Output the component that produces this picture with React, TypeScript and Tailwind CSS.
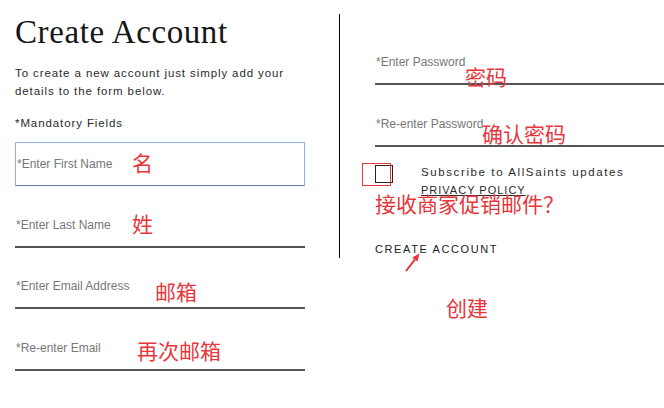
import React from 'react';

const leftFields = [
  { placeholder: '*Enter First Name', focused: true },
  { placeholder: '*Enter Last Name' },
  { placeholder: '*Enter Email Address' },
  { placeholder: '*Re-enter Email' },
];

const rightFields = ['*Enter Password', '*Re-enter Password'];

// red notes drawn over the screenshot
const notes = [
  { text: '名', cls: 'left-[132px] top-[152px]' },
  { text: '姓', cls: 'left-[132px] top-[213px]' },
  { text: '邮箱', cls: 'left-[155px] top-[281px]' },
  { text: '再次邮箱', cls: 'left-[137px] top-[340px]' },
  { text: '密码', cls: 'left-[465px] top-[66px]' },
  { text: '确认密码', cls: 'left-[482px] top-[123px]' },
  { text: '接收商家促销邮件？', cls: 'left-[375px] top-[193px]' },
  { text: '创建', cls: 'left-[446px] top-[297px]' },
];

function Field({ placeholder, focused }: { placeholder: string; focused?: boolean }) {
  return (
    <div
      className={`h-[44px] flex items-center ${
        focused ? 'border border-[#8fb0ea] border-b-[#5f7db8]' : 'border-b-2 border-[#555]'
      }`}
    >
      <input
        type="text"
        placeholder={placeholder}
        className="w-full bg-transparent outline-none pl-px text-[12px] text-[#333] placeholder:text-[#777]"
      />
    </div>
  );
}

export default function App() {
  return (
    <div className="relative w-[664px] h-[408px] overflow-hidden bg-white flex font-['Liberation_Sans',Arial,sans-serif] text-[#2a2a2a]">
      {/* Left column */}
      <div className="ml-[15px] w-[290px] shrink-0 flex flex-col">
        <h1 className="mt-[12px] text-[33px] leading-[40px] tracking-[0.6px] font-['Liberation_Serif','Times_New_Roman',serif] text-[#161616]">
          Create Account
        </h1>
        <p className="mt-[12px] text-[11.5px] leading-[18px] tracking-[0.9px]">
          To create a new account just simply add your
          <br />
          details to the form below.
        </p>
        <p className="mt-[14px] text-[11.5px] leading-[18px] tracking-[0.9px]">*Mandatory Fields</p>
        <div className="mt-[10px] flex flex-col gap-[17.5px]">
          {leftFields.map((f) => (
            <Field key={f.placeholder} placeholder={f.placeholder} focused={f.focused} />
          ))}
        </div>
      </div>

      {/* Divider */}
      <div className="ml-[34px] mt-[14px] h-[244px] w-px bg-black shrink-0" />

      {/* Right column */}
      <div className="ml-[35px] flex-1 flex flex-col pt-[41px]">
        <div className="flex flex-col gap-[17.5px]">
          {rightFields.map((p) => (
            <Field key={p} placeholder={p} />
          ))}
        </div>
        <div className="mt-[16.5px] flex items-start">
          <div className="mt-[2px] w-[18px] h-[18px] border border-[#222] shrink-0" />
          <div className="ml-[28px]">
            <p className="text-[11.5px] leading-[18px] tracking-[1.6px]">Subscribe to AllSaints updates</p>
            <a className="block text-[11px] leading-[18px] tracking-[1px] underline">PRIVACY POLICY</a>
          </div>
        </div>
        <button className="mt-[41px] self-start p-0 text-left text-[11px] leading-[18px] tracking-[1.6px] text-[#222]">
          CREATE ACCOUNT
        </button>
      </div>

      {/* Annotations */}
      <div className="absolute left-[362px] top-[163px] w-[29px] h-[23px] border border-[#e8363b]" />
      <svg className="absolute left-[400px] top-[250px]" width="25" height="25" viewBox="0 0 25 25">
        <line x1="6" y1="21" x2="15" y2="9.3" stroke="#e8363b" strokeWidth="2" />
        <polygon points="19.5,3.5 17.4,11.6 12.2,7.6" fill="#e8363b" />
      </svg>
      {notes.map((n) => (
        <span
          key={n.text}
          className={`absolute ${n.cls} text-[21px] leading-[21px] whitespace-nowrap text-[#e8363b] font-['Noto_Sans_CJK_SC','Noto_Sans',sans-serif]`}
        >
          {n.text}
        </span>
      ))}
    </div>
  );
}
